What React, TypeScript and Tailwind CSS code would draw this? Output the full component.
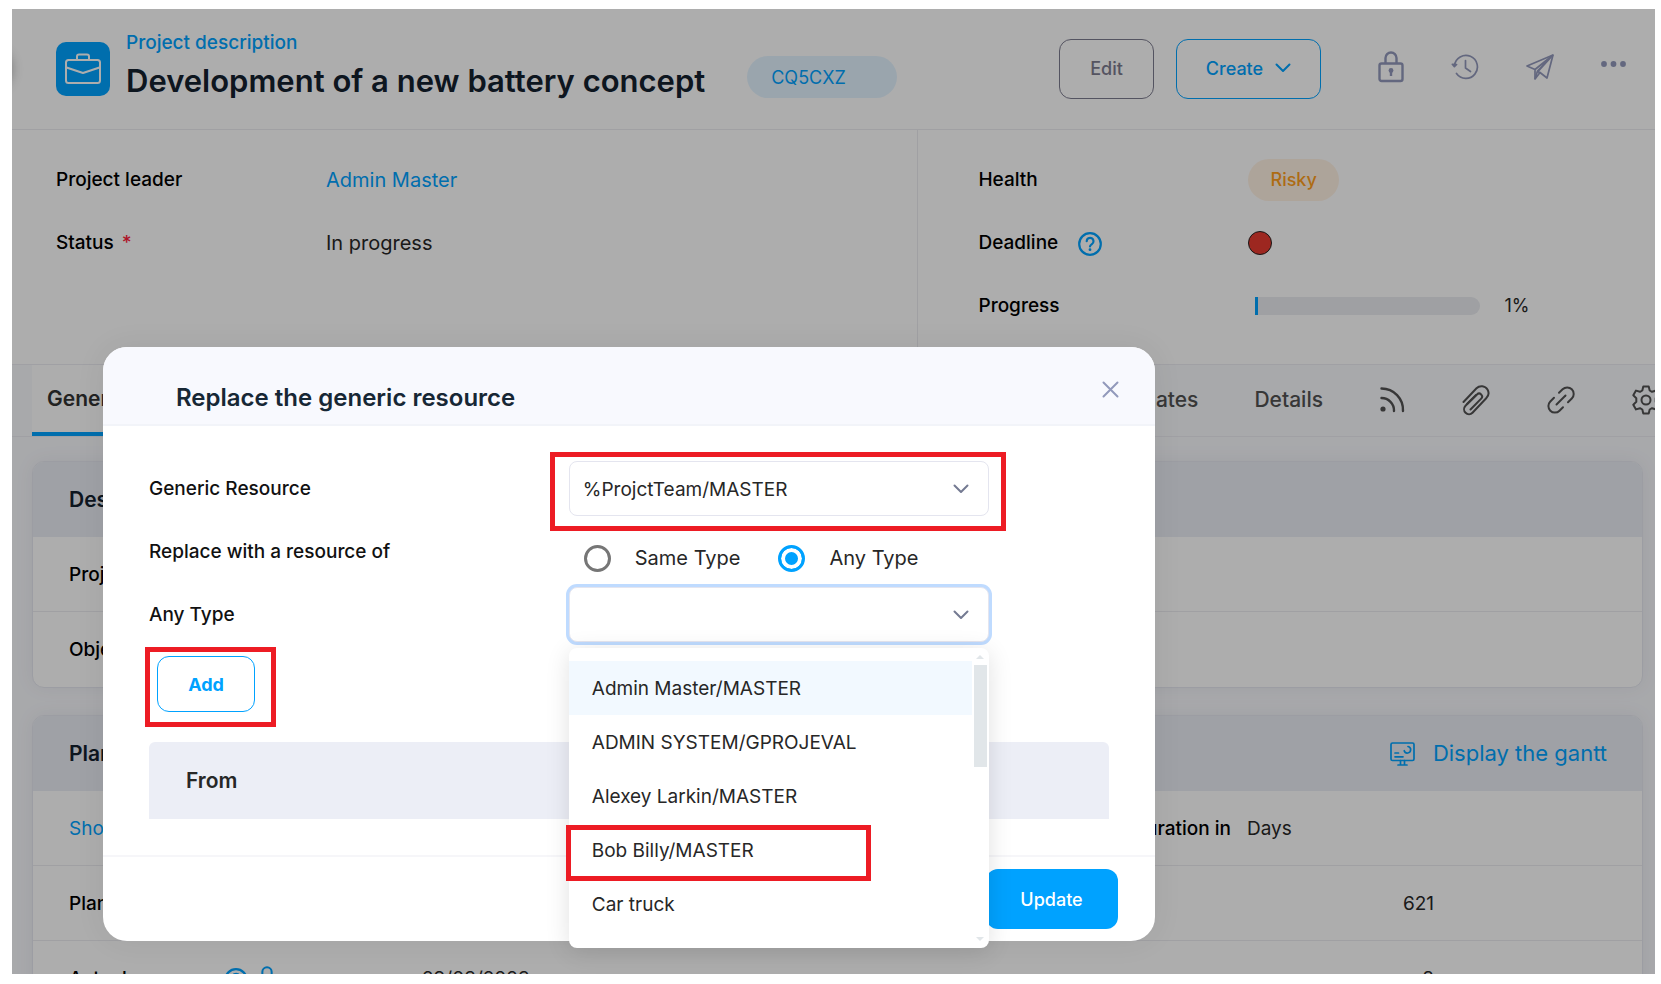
import { useState } from "react";
import type { ReactNode } from "react";
import clsx from "clsx";

const resources = [
  "Admin Master/MASTER",
  "ADMIN SYSTEM/GPROJEVAL",
  "Alexey Larkin/MASTER",
  "Bob Billy/MASTER",
  "Car truck",
  "Carlos Gomez/MASTER",
];

/* ---------- Icons ---------- */

function BriefcaseIcon() {
  return (
    <svg width="36" height="34" viewBox="0 0 36 34" fill="none" stroke="#fff" strokeWidth="2" strokeLinejoin="round">
      <rect x="1" y="8" width="34" height="23" rx="2.5" />
      <path d="M12 8V4.500a2 2 0 0 1 2-2h8a2 2 0 0 1 2 2V8" />
      <path d="M1.500 15.500 18 21l16.500-5.500" />
    </svg>
  );
}

function ChevronIcon({ className }: { className?: string }) {
  return (
    <svg className={className} width="16" height="10" viewBox="0 0 16 10" fill="none" stroke="currentColor" strokeWidth="2" strokeLinecap="round" strokeLinejoin="round">
      <path d="m1.500 1.500 6.500 6.500 6.500-6.500" />
    </svg>
  );
}

function LockIcon({ size = 26 }: { size?: number }) {
  return (
    <svg width={size} height={(size * 32) / 26} viewBox="0 0 26 32" fill="none" stroke="currentColor" strokeWidth="2.400">
      <rect x="1.500" y="12.500" width="23" height="17.500" rx="2" />
      <path d="M7.500 12V7a5.500 5.500 0 0 1 11 0v5" />
      <circle cx="13" cy="19.500" r="2.400" fill="currentColor" stroke="none" />
      <path d="M13 20v5" />
    </svg>
  );
}

function HistoryIcon() {
  return (
    <svg width="28" height="28" viewBox="0 0 28 28" fill="none" stroke="currentColor" strokeWidth="1.700" strokeLinecap="round" strokeLinejoin="round">
      <path d="M3.500 12.500A11.500 11.500 0 1 1 5.500 20.500" />
      <path d="M1.300 11.300 3.400 13.600 5.600 11.500Z" fill="currentColor" />
      <path d="M14.500 7.500v7.500l5 3.500" />
    </svg>
  );
}

function SendIcon() {
  return (
    <svg width="28" height="28" viewBox="0 0 28 28" fill="none" stroke="currentColor" strokeWidth="1.700" strokeLinejoin="round">
      <path d="M27 2 1 13l8 3.500V26l5-6.500 7 5.500Z" />
      <path d="M27 2 9 16.500M27 2 11.500 18 9 26M27 2 12 18.500l2.500 1.800" />
    </svg>
  );
}

function DotsIcon() {
  return (
    <svg width="25" height="20" viewBox="0 0 25 20" fill="currentColor">
      <circle cx="3" cy="7" r="2.900" />
      <circle cx="12.500" cy="7" r="2.900" />
      <circle cx="22" cy="7" r="2.900" />
    </svg>
  );
}

function RssIcon() {
  return (
    <svg width="26" height="26" viewBox="0 0 26 26" fill="none" stroke="currentColor" strokeWidth="2.400" strokeLinecap="round">
      <path d="M2.500 1.500A21.500 21.500 0 0 1 24 24M2.500 11A12.500 12.500 0 0 1 15 24" />
      <circle cx="4" cy="22" r="2.600" fill="currentColor" stroke="none" />
    </svg>
  );
}

function ClipIcon() {
  return (
    <svg width="30" height="32" viewBox="0 0 30 32" fill="none" stroke="currentColor" strokeWidth="2" strokeLinecap="round" strokeLinejoin="round">
      <path d="M2.500 18 15.500 4.300a7 7 0 0 1 11 1.200 7.200 7.200 0 0 1-1.300 8.700L11.500 28.700a4.900 4.900 0 0 1-7-6.900L16 10.500a2.900 2.900 0 0 1 4.200 4.100L9.500 25.500" />
      <path d="m6 20 9-9" />
    </svg>
  );
}

function LinkIcon() {
  return (
    <svg width="28" height="28" viewBox="0 0 28 28" fill="none" stroke="currentColor" strokeWidth="2" strokeLinecap="round">
      <path d="M12 6.800 15.600 3.300a6.500 6.500 0 0 1 9.200 9.200L21 16.200" />
      <path d="M7 11.800 3.300 15.500a6.500 6.500 0 0 0 9.200 9.200L16 21.200" />
      <path d="m9.500 18.500 9-9" />
    </svg>
  );
}

function GearIcon() {
  return (
    <svg width="30" height="30" viewBox="0 0 30 30" fill="none" stroke="currentColor" strokeWidth="2" strokeLinejoin="round">
      <path d="M12.300 1.500h5.400l1 4 2.300 1.300 4-1.200 2.700 4.700-3 2.900v3.600l3 2.900-2.700 4.700-4-1.200-2.300 1.300-1 4h-5.400l-1-4L9 23.200l-4 1.200-2.700-4.700 3-2.900v-3.600l-3-2.900L5 5.600l4 1.200 2.300-1.300Z" />
      <circle cx="15" cy="15" r="4.500" />
    </svg>
  );
}

function HelpIcon() {
  return (
    <svg width="24" height="24" viewBox="0 0 24 24" fill="none" stroke="currentColor" strokeWidth="2.200" strokeLinecap="round">
      <circle cx="12" cy="12" r="10.800" />
      <path d="M8.700 9.200a3.400 3.400 0 1 1 5.200 2.900c-1.200.8-1.900 1.300-1.900 2.400" />
      <circle cx="12" cy="17.700" r="1.400" fill="currentColor" stroke="none" />
    </svg>
  );
}

function GanttIcon() {
  return (
    <svg width="25" height="24" viewBox="0 0 25 24" fill="none" stroke="currentColor" strokeWidth="1.700" strokeLinecap="round">
      <rect x="1" y="1" width="23" height="17.500" rx="1.500" />
      <path d="M10.500 18.500V22M14.500 18.500V22M8 23h9M5 11h3.500M5 14.800h8" />
      <path d="M18 4.500a3.300 3.300 0 1 1-3.800 4.200" />
    </svg>
  );
}

/* ---------- Page behind the dialog ---------- */

function Field({ label, children }: { label: ReactNode; children?: ReactNode }) {
  return (
    <div className="flex h-[63px] items-center">
      <div className="flex w-[270px] shrink-0 items-center pt-0.5 font-medium text-black">{label}</div>
      <div className="flex flex-1 items-center text-[20px] text-[#272727]">{children}</div>
    </div>
  );
}

function PageHeader() {
  return (
    <header className="flex h-[121px] items-center border-b border-[#ececf0] pr-[29px] pl-11">
      <div className="flex size-[54px] shrink-0 items-center justify-center rounded-[10px] bg-[#00a2ff]">
        <BriefcaseIcon />
      </div>
      <div className="ml-4 whitespace-nowrap">
        <p className="text-[19px] leading-6 font-medium text-[#00a2ff]">Project description</p>
        <h1 className="text-[31px] leading-[52px] font-semibold text-[#14212f]">Development of a new battery concept</h1>
      </div>
      <span className="mt-4 ml-[42px] flex h-[42px] w-[150px] items-center rounded-full bg-[#e4f4ff] pl-6 text-[18px] text-[#00a2ff]">
        CQ5CXZ
      </span>
      <div className="ml-auto flex items-center gap-[22px] text-[18px] font-medium">
        <button className="h-[60px] w-[95px] rounded-xl border border-[#7d7c8f] pb-0.5 text-[#7d7c8f]">Edit</button>
        <button className="flex h-[60px] w-[145px] items-center justify-center gap-3 rounded-xl border border-[#00a2ff] pb-0.5 text-[#00a2ff]">
          Create
          <ChevronIcon />
        </button>
      </div>
      <div className="ml-[57px] flex items-center gap-[47px] pb-1 text-[#9299bb]">
        <button aria-label="Lock"><LockIcon /></button>
        <button aria-label="History"><HistoryIcon /></button>
        <button aria-label="Send"><SendIcon /></button>
        <button aria-label="More"><DotsIcon /></button>
      </div>
    </header>
  );
}

function Summary() {
  return (
    <section className="grid h-[234px] grid-cols-[16fr_13fr]">
      <div className="border-r border-[#ececf0] pt-[18px] pl-11">
        <Field label="Project leader">
          <a href="#leader" className="text-[#00a2ff]">Admin Master</a>
        </Field>
        <Field label={<>Status <span className="ml-2 text-[#ff1f3d]">*</span></>}>In progress</Field>
      </div>
      <div className="pt-[18px] pl-[60px]">
        <Field label="Health">
          <span className="flex h-[42px] items-center rounded-full bg-[#fff2e4] px-[22px] text-[18px] font-medium text-[#ff9f1c]">
            Risky
          </span>
        </Field>
        <Field label={<>Deadline <span className="ml-5 text-[#00a2ff]"><HelpIcon /></span></>}>
          <span className="size-6 rounded-full border border-[#222] bg-[#e83a30]" />
        </Field>
        <Field label="Progress">
          <div className="ml-[7px] h-[18px] w-[225px] overflow-hidden rounded-r-full bg-[#eaecf1]">
            <div className="h-full w-[3px] bg-[#00a2ff]" />
          </div>
          <span className="ml-6 text-[18px]">1%</span>
        </Field>
      </div>
    </section>
  );
}

function Tabs() {
  return (
    <nav className="flex h-[73px] border-y border-[#ececf2] bg-[#f8f9fd] text-[21px] text-[#525252]">
      <a href="#general" className="ml-5 flex w-[130px] items-center border-b-4 border-[#00a2ff] bg-white pl-[15px] font-semibold text-[#333]">
        General
      </a>
      <div className="-mr-1.5 ml-auto flex shrink-0 items-center gap-14 pb-0.5 font-medium">
        <a href="#updates">Updates</a>
        <a href="#details">Details</a>
        <button aria-label="Feed"><RssIcon /></button>
        <button aria-label="Attachments"><ClipIcon /></button>
        <button aria-label="Links"><LinkIcon /></button>
        <button aria-label="Settings"><GearIcon /></button>
      </div>
    </nav>
  );
}

function Card({ title, action, children }: { title: string; action?: ReactNode; children: ReactNode }) {
  return (
    <section className="overflow-hidden rounded-xl border border-[#e6e8f0] bg-white shadow-[0_0_20px_rgba(40,40,70,0.06)]">
      <div className="flex h-[75px] items-center justify-between bg-[#eaeef5] pr-[35px] pl-9">
        <h2 className="text-[21px] font-semibold text-[#14212f]">{title}</h2>
        {action}
      </div>
      <div className="divide-y divide-[#ececf0]">{children}</div>
    </section>
  );
}

function Row({ children }: { children: ReactNode }) {
  return <div className="flex h-[75px] items-center pt-0.5 pl-9 text-[#272727]">{children}</div>;
}

function RowLabel({ children }: { children: ReactNode }) {
  return <span className="font-medium text-black">{children}</span>;
}

/* ---------- Dialog ---------- */

function Highlight({ className }: { className: string }) {
  return <div className={clsx("pointer-events-none absolute border-[5px] border-[#ed1c24]", className)} />;
}

function ResourceList() {
  return (
    <div className="absolute inset-x-0 top-full z-10 mt-1.5">
      <div className="flex h-[300px] overflow-hidden rounded-lg bg-white shadow-[0_4px_24px_rgba(0,0,0,0.12)]">
        <ul role="listbox" aria-label="Resources" className="flex-1 pt-[13px] text-[#272727]">
          {resources.map((name, i) => (
            <li
              key={name}
              role="option"
              aria-selected={i === 0}
              className={clsx("flex h-[54px] items-center pt-0.5 pl-[23px]", i === 0 && "bg-[#f2f9ff]")}
            >
              {name}
            </li>
          ))}
        </ul>
        <div className="flex w-[17px] flex-col items-center pt-[7px] pb-[7px]">
          <span className="border-x-4 border-b-4 border-x-transparent border-b-[#e1e6e9]" />
          <span className="mt-1.5 h-[102px] w-[13px] bg-[#e1e6e9]" />
          <span className="mt-auto border-x-4 border-t-4 border-x-transparent border-t-[#e1e6e9]" />
        </div>
      </div>
      <Highlight className="top-[177px] right-[118px] -left-[3px] h-14" />
    </div>
  );
}

interface SelectProps {
  id: string;
  value?: string;
  focused?: boolean;
  children?: ReactNode;
}

function Select({ id, value = "", focused, children }: SelectProps) {
  return (
    <div className="relative w-full max-w-[420px]">
      <select
        id={id}
        defaultValue={value}
        className={clsx(
          "h-[55px] w-full appearance-none rounded-lg border border-[#e4e5ef] bg-white pt-1 pl-[13px] text-[#272727] outline-none",
          focused && "ring-3 ring-[#bfdbff]",
        )}
      >
        <option value={value}>{value}</option>
      </select>
      <ChevronIcon className="pointer-events-none absolute top-[23px] right-5 text-[#747a92]" />
      {children}
    </div>
  );
}

function FormRow({ label, htmlFor, children }: { label: string; htmlFor?: string; children: ReactNode }) {
  return (
    <div className="grid h-[63px] grid-cols-[7fr_9fr] items-center">
      <label htmlFor={htmlFor} className="pt-0.5 font-medium text-[#111]">{label}</label>
      {children}
    </div>
  );
}

function ReplaceDialog() {
  const [type, setType] = useState("any");

  return (
    <div
      role="dialog"
      aria-labelledby="dialog-title"
      className="mt-[338px] ml-[91px] w-[64%] rounded-3xl bg-white shadow-[0_0_32px_rgba(0,0,0,0.06)]"
    >
      <div className="flex h-[79px] items-end justify-between rounded-t-3xl border-b-2 border-[#f2f4f9] bg-[#f8f9fe] pr-9 pl-[73px]">
        <h2 id="dialog-title" className="pb-2.5 text-[24px] leading-8 font-semibold text-[#172735]">
          Replace the generic resource
        </h2>
        <button aria-label="Close" className="self-center pt-2 text-[#9299bb]">
          <svg width="17" height="17" viewBox="0 0 17 17" fill="none" stroke="currentColor" strokeWidth="2" strokeLinecap="round">
            <path d="m1.500 1.500 14 14M15.500 1.500l-14 14" />
          </svg>
        </button>
      </div>

      <form className="px-[46px] pt-[31px] pb-9" onSubmit={(e) => e.preventDefault()}>
        <FormRow label="Generic Resource" htmlFor="generic">
          <Select id="generic" value="%ProjctTeam/MASTER">
            <Highlight className="-top-[9px] -right-[17px] -bottom-[15px] -left-[19px]" />
          </Select>
        </FormRow>
        <FormRow label="Replace with a resource of">
          <div className="flex items-center gap-[38px] pt-[13px] pl-[15px] text-[20px] text-[#272727]">
            {[
              ["same", "Same Type"],
              ["any", "Any Type"],
            ].map(([value, text]) => (
              <label key={value} className="flex items-center gap-6">
                <input
                  type="radio"
                  name="type"
                  value={value}
                  checked={type === value}
                  onChange={() => setType(value)}
                  className="size-[27px] appearance-none rounded-full border-3 border-[#767676] checked:border-[#00a2ff] checked:bg-[#00a2ff] checked:shadow-[inset_0_0_0_4px_#fff]"
                />
                {text}
              </label>
            ))}
          </div>
        </FormRow>
        <FormRow label="Any Type" htmlFor="any-type">
          <Select id="any-type" focused>
            <ResourceList />
          </Select>
        </FormRow>
        <div className="relative mt-[10px] ml-2 w-fit">
          <button className="h-14 w-[98px] rounded-xl border border-[#00a2ff] text-[18px] font-bold text-[#00a2ff]">
            Add
          </button>
          <Highlight className="-top-[9px] -right-[21px] -bottom-[15px] -left-3" />
        </div>
        <table className="mt-[30px] w-full text-left">
          <thead>
            <tr className="h-[77px] bg-[#eceef6]">
              <th className="rounded-t-md pl-[37px] text-[21px] font-semibold text-[#272727]">From</th>
            </tr>
          </thead>
        </table>
      </form>

      <div className="flex h-[86px] items-center justify-end border-t-2 border-[#f6f6f9] pr-[37px]">
        <button className="h-[60px] w-[132px] rounded-xl bg-[#00a2ff] text-[18px] font-medium text-white">Update</button>
      </div>
    </div>
  );
}

export default function App() {
  return (
    <div className="h-screen bg-white pt-[9px] pr-1.5 pb-2.5 pl-3 font-['Inter','Liberation_Sans',sans-serif] text-[19px]">
      <main className="relative h-full overflow-hidden bg-white">
        <PageHeader />
        <Summary />
        <Tabs />
        <div className="flex flex-col gap-[27px] bg-[#f8f9fd] pt-6 pr-3 pl-5">
          <Card title="Description">
            <Row><RowLabel>Project type</RowLabel></Row>
            <Row><RowLabel>Objectives</RowLabel></Row>
          </Card>
          <Card
            title="Planning"
            action={
              <a href="#gantt" className="flex items-center gap-[18px] text-[22px] text-[#00a2ff]">
                <GanttIcon />
                Display the gantt
              </a>
            }
          >
            <Row>
              <a href="#show" className="text-[#00a2ff]">Show</a>
              <div className="ml-auto flex items-center gap-4">
                <RowLabel>Duration in</RowLabel>
                <span className="w-[395px]">Days</span>
              </div>
            </Row>
            <Row>
              <RowLabel>Planned</RowLabel>
              <span className="mr-52 ml-auto">621</span>
            </Row>
            <Row>
              <div className="flex w-[353px] items-center text-[#00a2ff]">
                <span className="w-[155px]"><RowLabel>Actual</RowLabel></span>
                <HelpIcon />
                <span className="ml-2"><LockIcon size={22} /></span>
              </div>
              <span>29/03/2023</span>
              <span className="mr-52 ml-auto">8</span>
            </Row>
          </Card>
        </div>

        {/* Collapsed side menu handle, only its shadow reaches the page */}
        <div className="absolute top-10 -left-10 size-10 rounded-full shadow-[0_0_12px_rgba(0,0,0,0.3)]" />

        <div className="absolute inset-0 flex items-start bg-black/32">
          <ReplaceDialog />
        </div>
      </main>
    </div>
  );
}
